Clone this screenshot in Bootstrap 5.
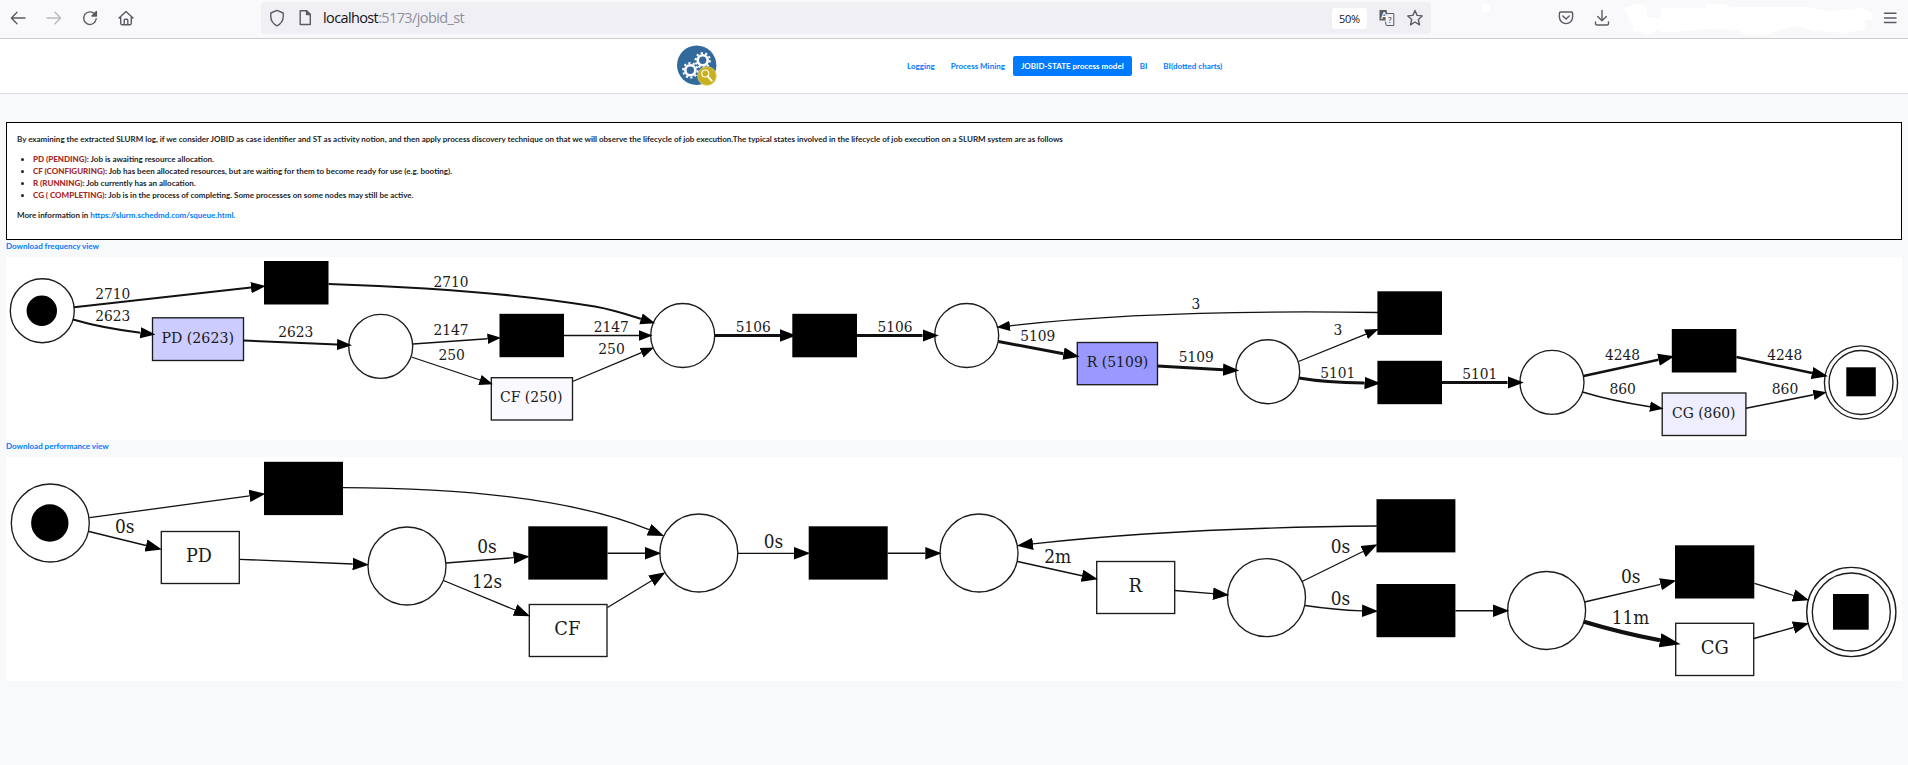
<!DOCTYPE html>
<html lang="en">
<head>
<meta charset="utf-8">
<meta name="viewport" content="width=device-width, initial-scale=1">
<title>JOBID-STATE process model</title>
<link href="https://cdn.jsdelivr.net/npm/bootstrap@5.3.0/dist/css/bootstrap.min.css" rel="stylesheet">
<style>
body{background:#f8f9fb;font-family:Lato,"Liberation Sans",sans-serif;font-size:8px;line-height:12px;font-weight:700;color:#212529;overflow:hidden}
a{color:#007bff;text-decoration:none}
.toolbar{height:39px;background:#f9f9fb;border-bottom:1px solid #ccc;padding:0 10px 2px 9px;font-weight:400}
.toolbar svg{flex:none;display:block}
.tools{gap:18px}
.ico{fill:none;stroke:#5b5b66;stroke-width:1.4;stroke-linecap:round;stroke-linejoin:round}
.urlbar{width:1170px;height:32px;margin-left:126px;background:#f0f0f4;border-radius:4px;padding:0 7px 0 8px}
.pageicon{margin-left:12px}
.urltext{font:14.5px/20px "Open Sans","Noto Sans",sans-serif;color:#15141a;margin-left:10px;letter-spacing:-.62px}
.urltext span{color:#8f8f9d}
.zoomlevel{width:35px;height:21px;background:#fff;border-radius:3px;font:11px/21px "Open Sans","Noto Sans",sans-serif;color:#15141a;letter-spacing:-.3px}
.star{margin-left:7px}
.sq{margin-left:51px;margin-bottom:20px}
.pocket{margin-left:68px}
.down{margin-left:20px}
.smudge{margin-left:14px}
.sitebar{height:55px;border-bottom:1px solid #dee2e6}
.brandmark{margin-left:676px}
.sitebar .nav{margin-left:181px}
.sitebar .nav-link{color:#007bff;font-size:8px;font-weight:700;line-height:12px;padding:4px 8px;border-radius:2px}
.sitebar .nav-link.active{background:#007bff;color:#fff}
.report{padding:28px 6px 0}
.intro{height:118px;border:1px solid #000;padding:10px 10px}
.intro p{margin-bottom:8px}
.intro ul{padding-left:16px;margin-bottom:8px}
.intro li b{color:#a52a2a}
.dl{height:17px;line-height:13px}
.net{display:block;width:1896px;background:#fff}
.net text{font-family:"DejaVu Serif Condensed","DejaVu Serif",serif;font-size:15.2px;fill:#1a1a1a;text-anchor:middle;font-weight:400}
.net .big text{font-size:17.8px}
.node{fill:#fff;stroke:#1c1c1c;stroke-width:1.35}
.silent{fill:#000}
.flow{fill:none;stroke:#111;stroke-width:1.3}
.w15{stroke-width:1.6}.w2{stroke-width:2}.w25{stroke-width:2.5}.w3{stroke-width:3}.w4{stroke-width:4.2}
</style>
</head>
<body>
<div class="toolbar d-flex align-items-center">
  <div class="tools d-flex">
    <svg class="ico" width="18" height="18"><path d="M2.700 9H16M8 3.300 2.400 9 8 14.700"/></svg>
    <svg class="ico" width="18" height="18" opacity=".4"><path d="M2 9h13.400M10 3.300 15.600 9 10 14.700"/></svg>
    <svg class="ico" width="18" height="18"><path d="M15.200 9.800A6.300 6.300 0 1 1 13.600 4.900"/><path d="M15.400 2.600V7h-4.500z" fill="#5b5b66"/></svg>
    <svg class="ico" width="18" height="18"><path d="M2 9.100 9 2.500l7 6.600M3.700 8v6.300a1.400 1.400 0 0 0 1.400 1.400h7.800a1.400 1.400 0 0 0 1.400-1.400V8M7.200 15.500v-4.200a1 1 0 0 1 1-1h1.600a1 1 0 0 1 1 1v4.200"/></svg>
  </div>
  <div class="urlbar d-flex align-items-center">
    <svg class="ico" width="16" height="18"><path d="M8 1.400 14.200 4v3.500C14.200 12 11.500 15 8 16.800 4.500 15 1.800 12 1.800 7.500V4z"/></svg>
    <svg class="ico pageicon" width="16" height="18"><path d="M3.200 1.700H9.500L13.300 5.500V15.500H3.200z"/><path d="M9.500 1.700V5.500H13.300z" fill="#5b5b66"/></svg>
    <div class="urltext">localhost<span>:5173/jobid_st</span></div>
    <div class="zoomlevel ms-auto text-center">50%</div>
    <svg class="ms-2" width="24" height="18"><path d="M4.500 1h7l2.500 10.500H4.500z" fill="#5b5b66"/><path d="M11.500 4.500h7.300v12h-7.500l-1-4" fill="#f0f0f4" stroke="#5b5b66"/><text x="6" y="9.500" font-size="9" font-weight="700" fill="#fff">A</text><text x="13" y="13.500" font-size="8" font-weight="700" fill="#5b5b66">?</text></svg>
    <svg class="ico star" width="18" height="18"><path d="M9 1.500 11.100 6.400 16.200 6.900 12.300 10.400 13.500 15.800 9 13 4.500 15.800 5.700 10.400 1.800 6.900 6.900 6.400z"/></svg>
  </div>
  <svg class="sq" width="8" height="8"><path d="M0 0h8v8H0z" fill="#fff"/></svg>
  <svg class="ico pocket" width="16" height="18"><path d="M2.600 3h10.800a1.200 1.200 0 0 1 1.200 1.200V8a6.600 6.600 0 0 1-13.200 0V4.200A1.200 1.200 0 0 1 2.600 3zM4.800 7 8 10.100 11.200 7"/></svg>
  <svg class="ico down" width="16" height="18"><path d="M8 1.500v10.300M3.700 7.600 8 11.800l4.300-4.200M1.500 13v1.500a1.500 1.500 0 0 0 1.500 1.500h10a1.500 1.500 0 0 0 1.500-1.500V13"/></svg>
  <svg class="smudge" width="248" height="36"><path d="M0 8 8 6 9 4h10l4 3v11h14V8h44l2-4h16l8 3h74l24 4 20-2 14-1 6 4h5v7l-9 1v9l-20 4-30-2-20-5-16 4-14 5h-20l-6-5-32-1-36 3h-10l-2-3-10 5-8-2-8-1v-4z" fill="#fff"/></svg>
  <svg class="ico ms-auto" width="16" height="18"><path d="M2.500 4.200h11.500M2.500 9h11.500M2.500 13.500h11.500"/></svg>
</div>

<header class="sitebar bg-white d-flex align-items-center">
  <svg class="brandmark" width="42" height="42" viewBox="0 0 42 42">
    <circle cx="20.700" cy="20.300" r="19.700" fill="#336a9c"/>
    <g fill="none" stroke="#fff">
      <circle cx="14.300" cy="25.300" r="5" stroke-width="2.600"/><circle cx="14.300" cy="25.300" r="7.200" stroke-width="2" stroke-dasharray="2.200 2.324"/>
      <circle cx="26.700" cy="15.300" r="5" stroke-width="2.600"/><circle cx="26.700" cy="15.300" r="7.200" stroke-width="2" stroke-dasharray="2.200 2.324"/>
    </g>
    <circle cx="31" cy="31" r="9.400" fill="#c9b01c" stroke="#e9dfa0" stroke-width=".6"/>
    <g fill="none" stroke="#fff"><circle cx="29.300" cy="28.500" r="3.500" stroke-width="1.100"/><path d="m31.800 31.300 4 4.600" stroke-width="1.800" stroke-linecap="round"/></g>
  </svg>
  <nav class="nav nav-pills">
    <a class="nav-link" href="#">Logging</a>
    <a class="nav-link" href="#">Process Mining</a>
    <a class="nav-link active" href="#">JOBID-STATE process model</a>
    <a class="nav-link" href="#">BI</a>
    <a class="nav-link" href="#">BI(dotted charts)</a>
  </nav>
</header>

<main class="report">
  <section class="intro bg-white">
    <p>By examining the extracted SLURM log, if we consider JOBID as case identifier and ST as activity notion, and then apply process discovery technique on that we will observe the lifecycle of job execution.The typical states involved in the lifecycle of job execution on a SLURM system are as follows</p>
    <ul>
      <li><b>PD (PENDING)</b>: Job is awaiting resource allocation.</li>
      <li><b>CF (CONFIGURING)</b>: Job has been allocated resources, but are waiting for them to become ready for use (e.g. booting).</li>
      <li><b>R (RUNNING)</b>: Job currently has an allocation.</li>
      <li><b>CG ( COMPLETING)</b>: Job is in the process of completing. Some processes on some nodes may still be active.</li>
    </ul>
    <p>More information in <a href="#">https://slurm.schedmd.com/squeue.html.</a></p>
  </section>

  <div class="dl"><a href="#">Download frequency view</a></div>
  <svg class="net" height="183" viewBox="6 257 1896 183">
    <defs>
      <marker id="tip" markerUnits="userSpaceOnUse" markerWidth="15" markerHeight="12" refX="0" refY="6" orient="auto"><path d="M0 .8 13.600 6 0 11.200z"/></marker>
      <marker id="tipMid" markerUnits="userSpaceOnUse" markerWidth="16" markerHeight="12" refX="0" refY="6" orient="auto"><path d="M0 .4 15 6 0 11.600z"/></marker>
      <marker id="tipWide" markerUnits="userSpaceOnUse" markerWidth="18" markerHeight="14" refX="0" refY="7" orient="auto"><path d="M0 .8 16.300 7 0 13.200z"/></marker>
      <marker id="tipBig" markerUnits="userSpaceOnUse" markerWidth="22" markerHeight="16" refX="0" refY="8" orient="auto"><path d="M0 .8 21 8 0 15.200z"/></marker>
    </defs>
    <g class="node">
      <circle cx="42.300" cy="310.700" r="32"/><circle cx="380.700" cy="346.300" r="32"/><circle cx="682.700" cy="335.500" r="32"/><circle cx="966.700" cy="335.500" r="32"/><circle cx="1267.700" cy="371.700" r="32"/><circle cx="1552" cy="382.300" r="32"/>
      <circle cx="1861" cy="382.500" r="36.600"/><circle cx="1861" cy="382.500" r="32"/>
      <rect x="152.500" y="317.800" width="91" height="42.700" fill="#ccf"/>
      <rect x="491.300" y="377.700" width="81.200" height="42.300" fill="#faf9ff"/>
      <rect x="1077.300" y="342.500" width="80.200" height="42.200" fill="#99f"/>
      <rect x="1662.200" y="393" width="83.700" height="42.500" fill="#eef"/>
    </g>
    <g class="silent">
      <circle cx="41.800" cy="310.700" r="15.200"/>
      <rect x="264" y="261" width="64.500" height="43.500"/><rect x="499.500" y="313.800" width="64.500" height="43.400"/><rect x="792.300" y="313.800" width="64.700" height="43.500"/><rect x="1377.400" y="291.300" width="64.600" height="43.600"/><rect x="1377.400" y="360.800" width="64.600" height="43.400"/><rect x="1671.800" y="329" width="64.600" height="43.500"/><rect x="1846.300" y="367.300" width="29.500" height="29"/>
    </g>
    <g class="flow">
      <path marker-end="url(#tipMid)" class="w2" d="M74 307.300 251 287.600"/>
      <path marker-end="url(#tipMid)" class="w2" d="M73 319.500Q102 328 140.500 332.700"/>
      <path marker-end="url(#tipMid)" class="w2" d="M243.500 340.500 337 344.500"/>
      <path marker-end="url(#tipMid)" class="w2" d="M328.500 284C420 287 520 294 595 306.500 612 309.500 626 314 641 318.800"/>
      <path marker-end="url(#tip)" class="w15" d="M413 344 487.500 338.700"/>
      <path marker-end="url(#tip)" d="M411.500 357 480 380"/>
      <path marker-end="url(#tip)" class="w15" d="M564 335.500H639"/>
      <path marker-end="url(#tip)" d="M572.500 381.500 641.500 352.700"/>
      <path marker-end="url(#tipWide)" class="w3" d="M714.700 335.500H780"/>
      <path marker-end="url(#tipWide)" class="w3" d="M857 335.500H922.500"/>
      <path marker-end="url(#tip)" d="M1378 312.500C1240 310.500 1120 313 1010 325.800"/>
      <path marker-end="url(#tipWide)" class="w3" d="M998.500 341.500 1063.500 353.700"/>
      <path marker-end="url(#tipWide)" class="w3" d="M1157.500 366 1223 369.700"/>
      <path marker-end="url(#tip)" d="M1298.500 361.500 1366 334.200"/>
      <path marker-end="url(#tipWide)" class="w3" d="M1299 378Q1325 382.500 1364.500 383"/>
      <path marker-end="url(#tipWide)" class="w3" d="M1442 382.500H1507.500"/>
      <path marker-end="url(#tipWide)" class="w25" d="M1583.500 376 1658.500 359.800"/>
      <path marker-end="url(#tip)" class="w15" d="M1582.500 392Q1612 401 1650 406.700"/>
      <path marker-end="url(#tipWide)" class="w25" d="M1736.400 357 1812 373"/>
      <path marker-end="url(#tip)" class="w15" d="M1746 408.300 1813.500 394.800"/>
    </g>
    <g>
      <text x="112.700" y="298.500" textLength="35" lengthAdjust="spacingAndGlyphs">2710</text>
      <text x="112.700" y="321.300" textLength="35" lengthAdjust="spacingAndGlyphs">2623</text>
      <text x="197.700" y="342.600" textLength="72.500" lengthAdjust="spacingAndGlyphs">PD (2623)</text>
      <text x="295.700" y="337" textLength="35" lengthAdjust="spacingAndGlyphs">2623</text>
      <text x="451" y="287" textLength="35" lengthAdjust="spacingAndGlyphs">2710</text>
      <text x="451" y="335.300" textLength="35" lengthAdjust="spacingAndGlyphs">2147</text>
      <text x="451.700" y="359.800" textLength="26.500" lengthAdjust="spacingAndGlyphs">250</text>
      <text x="531.200" y="402.300" textLength="62.500" lengthAdjust="spacingAndGlyphs">CF (250)</text>
      <text x="611.300" y="332" textLength="35" lengthAdjust="spacingAndGlyphs">2147</text>
      <text x="611.500" y="354" textLength="26.500" lengthAdjust="spacingAndGlyphs">250</text>
      <text x="753.300" y="332" textLength="35" lengthAdjust="spacingAndGlyphs">5106</text>
      <text x="895" y="332" textLength="35" lengthAdjust="spacingAndGlyphs">5106</text>
      <text x="1196" y="308.800" textLength="8.800" lengthAdjust="spacingAndGlyphs">3</text>
      <text x="1037.700" y="340.500" textLength="35" lengthAdjust="spacingAndGlyphs">5109</text>
      <text x="1117.500" y="367.300" textLength="61.500" lengthAdjust="spacingAndGlyphs">R (5109)</text>
      <text x="1196.300" y="361.500" textLength="35" lengthAdjust="spacingAndGlyphs">5109</text>
      <text x="1338" y="335.200" textLength="8.800" lengthAdjust="spacingAndGlyphs">3</text>
      <text x="1337.800" y="377.500" textLength="35" lengthAdjust="spacingAndGlyphs">5101</text>
      <text x="1479.700" y="378.500" textLength="35" lengthAdjust="spacingAndGlyphs">5101</text>
      <text x="1622.500" y="360" textLength="35" lengthAdjust="spacingAndGlyphs">4248</text>
      <text x="1622.700" y="393.500" textLength="26.500" lengthAdjust="spacingAndGlyphs">860</text>
      <text x="1703.800" y="418.200" textLength="63.500" lengthAdjust="spacingAndGlyphs">CG (860)</text>
      <text x="1784.700" y="360" textLength="35" lengthAdjust="spacingAndGlyphs">4248</text>
      <text x="1785" y="393.500" textLength="26.500" lengthAdjust="spacingAndGlyphs">860</text>
    </g>
  </svg>

  <div class="dl"><a href="#">Download performance view</a></div>
  <svg class="net" height="224" viewBox="6 457 1896 224">
    <g class="node">
      <circle cx="50.300" cy="523" r="39"/><circle cx="407" cy="566" r="39"/><circle cx="698.800" cy="553" r="39"/><circle cx="979" cy="553" r="39"/><circle cx="1266.500" cy="597.600" r="39"/><circle cx="1546.600" cy="610.500" r="39"/>
      <circle cx="1851.300" cy="612" r="44.600"/><circle cx="1851.300" cy="612" r="39"/>
      <rect x="161.300" y="531.500" width="78" height="52"/><rect x="529.300" y="604.500" width="77.700" height="52"/><rect x="1096.700" y="561.500" width="78" height="52"/><rect x="1675.700" y="623.300" width="78" height="52.200"/>
    </g>
    <g class="silent">
      <circle cx="49.800" cy="523" r="18.700"/>
      <rect x="264" y="461.800" width="79" height="53.300"/><rect x="528.300" y="526.300" width="79.200" height="53.300"/><rect x="808.700" y="526.300" width="79" height="53.300"/><rect x="1376.500" y="499.200" width="78.900" height="53.200"/><rect x="1376.500" y="584" width="78.900" height="53.200"/><rect x="1675" y="545.300" width="79.300" height="53.200"/><rect x="1833" y="594" width="35.700" height="35.700"/>
    </g>
    <g class="flow">
      <path marker-end="url(#tipWide)" d="M89.500 517.700 249.500 495.900"/>
      <path marker-end="url(#tipWide)" d="M89 531.500 146 545.500"/>
      <path marker-end="url(#tipWide)" d="M239.300 559.300 352.700 564"/>
      <path marker-end="url(#tipWide)" d="M343 487.700C430 488 560 493 649 529.700"/>
      <path marker-end="url(#tipWide)" d="M446 563 513.500 557.700"/>
      <path marker-end="url(#tipWide)" d="M443.500 580.500 515 610"/>
      <path marker-end="url(#tipWide)" class="w15" d="M607.500 553.300H645"/>
      <path marker-end="url(#tipWide)" d="M607.500 607.500 651.500 580.800"/>
      <path marker-end="url(#tipWide)" d="M737.800 553.300H794"/>
      <path marker-end="url(#tipWide)" class="w15" d="M887.700 553.300H925.300"/>
      <path marker-end="url(#tipWide)" d="M1377 526C1260 527 1130 533 1033 543.900"/>
      <path marker-end="url(#tipWide)" class="w15" d="M1017.500 561.500 1082 575.800"/>
      <path marker-end="url(#tipWide)" d="M1174.700 590.500 1213 593.700"/>
      <path marker-end="url(#tipWide)" d="M1302 581.500 1363 551.500"/>
      <path marker-end="url(#tipWide)" d="M1305 605.500Q1335 610 1362 610.800"/>
      <path marker-end="url(#tipWide)" class="w15" d="M1455.400 610.700H1493"/>
      <path marker-end="url(#tipWide)" d="M1584.500 602 1660.500 584.300"/>
      <path marker-end="url(#tipBig)" class="w4" d="M1584 621.700Q1620 632.500 1660 640.300"/>
      <path marker-end="url(#tipWide)" d="M1754.500 583.300 1793.500 595.500"/>
      <path marker-end="url(#tipWide)" d="M1754 638.500 1793.500 627.500"/>
    </g>
    <g class="big">
      <text x="124.700" y="533.200" textLength="19.500" lengthAdjust="spacingAndGlyphs">0s</text>
      <text x="199" y="561.500" textLength="26" lengthAdjust="spacingAndGlyphs">PD</text>
      <text x="487" y="552.500" textLength="19.500" lengthAdjust="spacingAndGlyphs">0s</text>
      <text x="487" y="587.500" textLength="30" lengthAdjust="spacingAndGlyphs">12s</text>
      <text x="567.300" y="634.500" textLength="26" lengthAdjust="spacingAndGlyphs">CF</text>
      <text x="773.500" y="548.200" textLength="19.500" lengthAdjust="spacingAndGlyphs">0s</text>
      <text x="1057.700" y="562.500" textLength="27" lengthAdjust="spacingAndGlyphs">2m</text>
      <text x="1135.200" y="591.700" textLength="13.500" lengthAdjust="spacingAndGlyphs">R</text>
      <text x="1340.500" y="552.500" textLength="19.500" lengthAdjust="spacingAndGlyphs">0s</text>
      <text x="1340.500" y="604.500" textLength="19.500" lengthAdjust="spacingAndGlyphs">0s</text>
      <text x="1630.700" y="582.500" textLength="19.500" lengthAdjust="spacingAndGlyphs">0s</text>
      <text x="1630.500" y="624" textLength="37.500" lengthAdjust="spacingAndGlyphs">11m</text>
      <text x="1714.700" y="654" textLength="28" lengthAdjust="spacingAndGlyphs">CG</text>
    </g>
  </svg>
</main>
<script src="https://cdn.jsdelivr.net/npm/bootstrap@5.3.0/dist/js/bootstrap.bundle.min.js"></script>
</body>
</html>
